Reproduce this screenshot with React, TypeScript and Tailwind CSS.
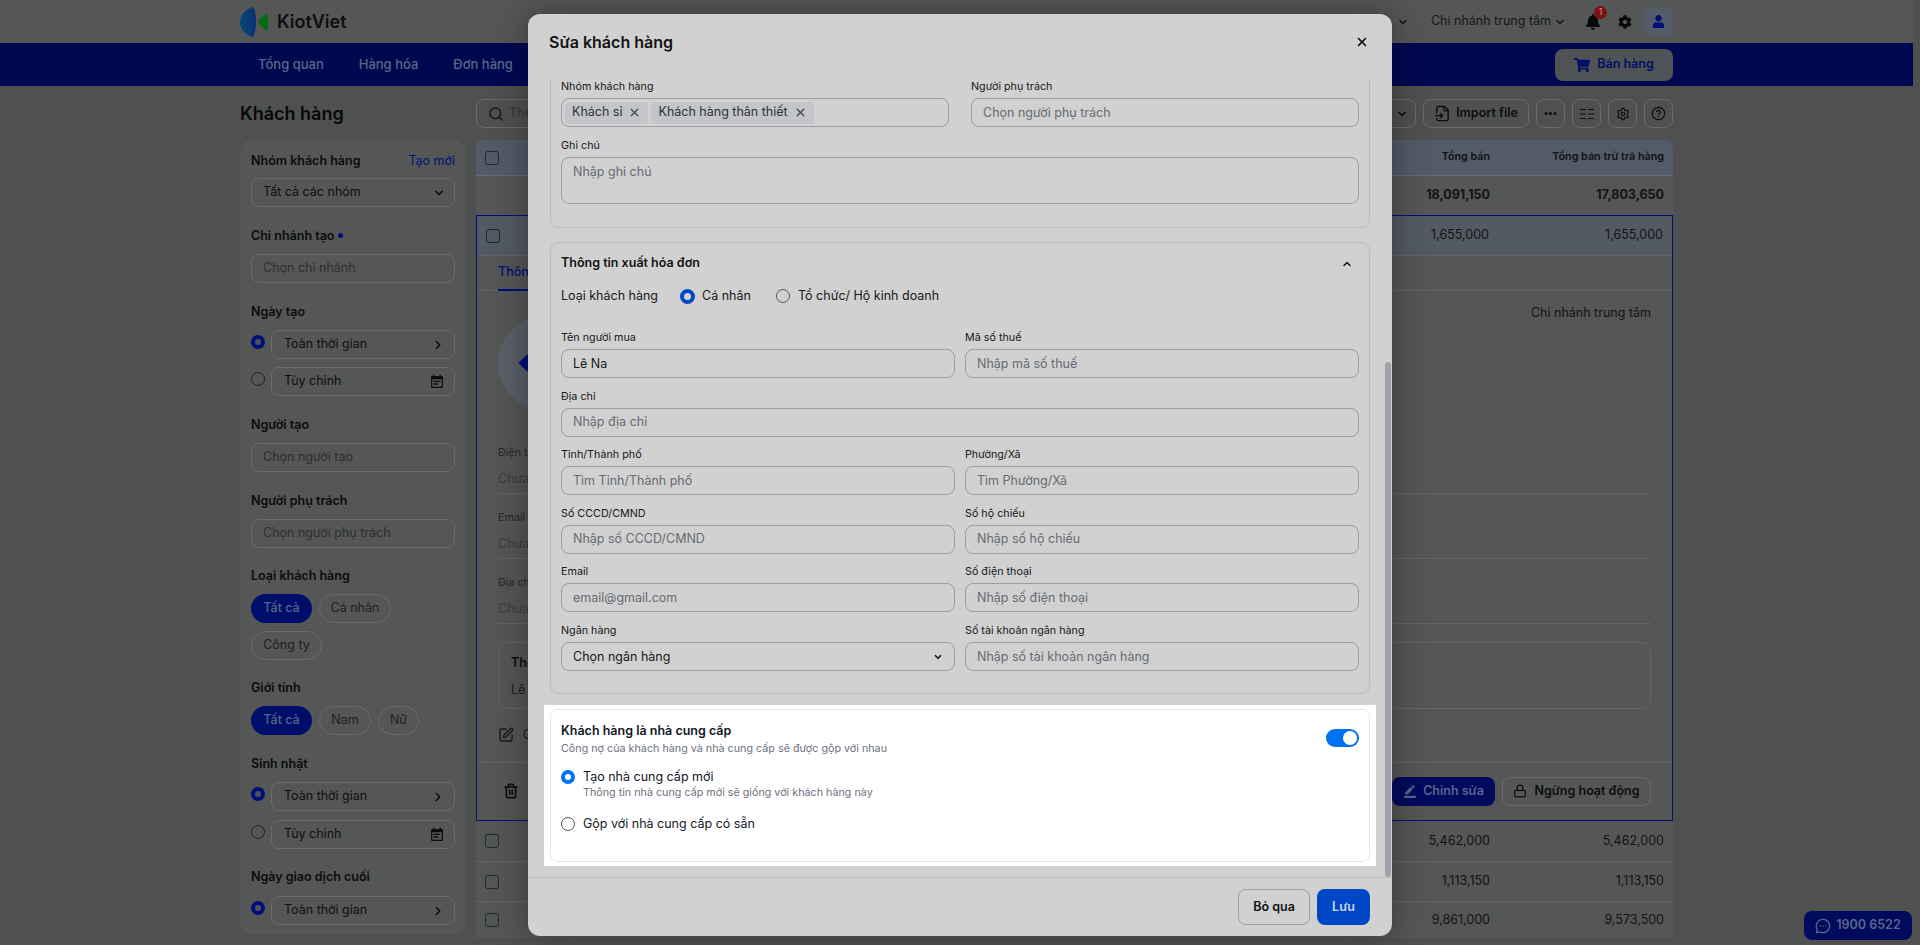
import React from "react";
import { ChevronDown, ChevronRight, ChevronUp, CircleHelp, Ellipsis, FileInput, Lock, MessageCircleMore, Search, Settings, SquarePen, Trash2, X } from "lucide-react";
import { FaBell, FaCog, FaShoppingCart, FaUser } from "react-icons/fa";
import { MdEventNote, MdBorderColor } from "react-icons/md";

function Logo() {
  return (
    <svg width="30" height="30" viewBox="0 0 30 30" className="shrink-0">
      <defs>
        <linearGradient id="lg" x1="0" x2="1" y1="0" y2="0">
          <stop offset="0" stopColor="#074a78" />
          <stop offset="1" stopColor="#0b2f73" />
        </linearGradient>
      </defs>
      <path d="M13.5 0C5 2 0 8 0 15s5 13 13.500 15C15.500 25 16 20 16 15S15.500 5 13.500 0z" fill="url(#lg)" />
      <path d="M27.500 6c1 6 1 12 0 18-3-1.500-7-5-10-9 3-4 7-7.500 10-9z" fill="#056b16" />
    </svg>
  );
}

function SideLabel({ children, className = "" }: { children: React.ReactNode; className?: string }) {
  return <div className={"h-[17px] text-[12.5px] leading-[17px] font-semibold text-[#0b0c0d] " + className}>{children}</div>;
}

function SideInput({ text }: { text: string }) {
  return <div className="mt-[10px] flex h-[29px] items-center rounded-lg border border-[#696b6c] px-[11px] text-[12.5px] text-[#2c2f33]">{text}</div>;
}

function RadioDark({ on }: { on?: boolean }) {
  return on ? (
    <span className="block size-[14px] shrink-0 rounded-full border-[4px] border-[#00107a] bg-[#50535a]" />
  ) : (
    <span className="block size-[14px] shrink-0 rounded-full border border-[#1d2430]" />
  );
}

function DateRow({ on, text, cal }: { on?: boolean; text: string; cal?: boolean }) {
  return (
    <div className="flex items-start gap-[6px]">
      <span className="pt-[5px]"><RadioDark on={on} /></span>
      <div className="flex h-[29px] flex-1 items-center justify-between rounded-lg border border-[#696b6c] pl-[12px] pr-[9px] text-[12.5px] text-[#0e0f11]">
        <span>{text}</span>
        {cal ? <MdEventNote size={16} className="text-[#0c0d0f]" /> : <ChevronRight size={14} strokeWidth={2.5} className="text-[#0c0d0f]" />}
      </div>
    </div>
  );
}

function Pill({ text, on, w }: { text: string; on?: boolean; w: string }) {
  return on ? (
    <span className={"flex h-[29px] items-center justify-center rounded-full bg-[#000e6b] text-[12.5px] font-medium text-[#59678a] " + w}>{text}</span>
  ) : (
    <span className={"flex h-[29px] items-center justify-center rounded-full border border-[#696b6c] text-[12.5px] text-[#1d2024] " + w}>{text}</span>
  );
}

function Sidebar() {
  return (
    <aside className="h-[794px] w-[226px] shrink-0 overflow-hidden rounded-xl bg-[#555656] px-[11px] pt-[12px]">
      <div className="flex items-center justify-between">
        <SideLabel>Nhóm khách hàng</SideLabel>
        <span className="text-[12.5px] leading-[17px] text-[#00107a]">Tạo mới</span>
      </div>
      <div className="mt-[9px] flex h-[29px] items-center justify-between rounded-lg border border-[#696b6c] pl-[11px] pr-[9px] text-[12.5px] text-[#0e0f11]">
        <span>Tất cả các nhóm</span>
        <ChevronDown size={12} strokeWidth={3.5} className="text-[#0c0d0f]" />
      </div>
      <SideLabel className="mt-[20px] flex items-center gap-[4px]">Chi nhánh tạo <span className="size-[5px] rounded-full bg-[#00107a]" /></SideLabel>
      <SideInput text="Chọn chi nhánh" />
      <SideLabel className="mt-[20px]">Ngày tạo</SideLabel>
      <div className="mt-[10px] flex flex-col gap-[8px]">
        <DateRow on text="Toàn thời gian" />
        <DateRow text="Tùy chỉnh" cal />
      </div>
      <SideLabel className="mt-[20px]">Người tạo</SideLabel>
      <SideInput text="Chọn người tạo" />
      <SideLabel className="mt-[20px]">Người phụ trách</SideLabel>
      <SideInput text="Chọn người phụ trách" />
      <SideLabel className="mt-[19px]">Loại khách hàng</SideLabel>
      <div className="mt-[10px] flex flex-wrap gap-x-[7px] gap-y-[8px]">
        <Pill on text="Tất cả" w="w-[61px]" />
        <Pill text="Cá nhân" w="w-[72px]" />
        <Pill text="Công ty" w="w-[71px]" />
      </div>
      <SideLabel className="mt-[19px]">Giới tính</SideLabel>
      <div className="mt-[10px] flex gap-[7px]">
        <Pill on text="Tất cả" w="w-[61px]" />
        <Pill text="Nam" w="w-[52px]" />
        <Pill text="Nữ" w="w-[41px]" />
      </div>
      <SideLabel className="mt-[20px]">Sinh nhật</SideLabel>
      <div className="mt-[10px] flex flex-col gap-[9px]">
        <DateRow on text="Toàn thời gian" />
        <DateRow text="Tùy chỉnh" cal />
      </div>
      <SideLabel className="mt-[19px]">Ngày giao dịch cuối</SideLabel>
      <div className="mt-[11px] flex flex-col gap-[9px]">
        <DateRow on text="Toàn thời gian" />
      </div>
    </aside>
  );
}

function ToolBtn({ children, className = "" }: { children: React.ReactNode; className?: string }) {
  return <div className={"flex h-[29px] items-center justify-center rounded-lg border border-[#696b6c] text-[#0c0d0f] " + className}>{children}</div>;
}

function Check() {
  return <span className="block size-[14px] shrink-0 rounded-[3px] border border-[#1f2733]" />;
}

function DataRow({ a, b, className = "" }: { a: string; b: string; className?: string }) {
  return (
    <div className={"flex items-center pl-[9px] pr-[9px] " + className}>
      <Check />
      <span className="ml-auto w-[140px] text-right text-[12.5px] text-[#121315]">{a}</span>
      <span className="w-[174px] text-right text-[12.5px] text-[#121315]">{b}</span>
    </div>
  );
}

function Info({ label }: { label: string }) {
  return (
    <div className="flex h-[65px] flex-col border-b border-[#626364]">
      <span className="mt-[16px] text-[10.75px] leading-[16px] text-[#24272b]">{label}</span>
      <span className="mt-[9px] text-[12.5px] leading-[17px] text-[#3a3d41]">Chưa có</span>
    </div>
  );
}

function MainTable() {
  return (
    <div className="ml-[10px] flex-1">
      <div className="flex h-[36px] items-center justify-between rounded-t-lg border-b border-[#5f6c82] bg-[#535b68] px-[9px]">
        <Check />
        <div className="flex text-[10.75px] font-semibold text-[#101215]">
          <span className="w-[140px] text-right">Tổng bán</span>
          <span className="w-[174px] text-right">Tổng bán trừ trả hàng</span>
        </div>
      </div>
      <div className="flex h-[39px] items-center justify-end bg-[#555656] pr-[9px]">
        <span className="w-[140px] text-right text-[12.5px] font-bold text-[#121315]">18,091,150</span>
        <span className="w-[174px] text-right text-[12.5px] font-bold text-[#121315]">17,803,650</span>
      </div>
      <div className="h-[606px] border-[1.5px] border-[#00107a] bg-[#555656]">
        <DataRow a="1,655,000" b="1,655,000" className="h-[40px] border-b border-[#626364] bg-[#535a62] pr-[8px]" />
        <div className="h-[35px] border-b border-[#626364] pl-[21px]">
          <span className="flex h-[35px] w-[31px] items-center border-b-2 border-[#00107a] text-[12.5px] font-medium whitespace-nowrap text-[#00107a]">Thông</span>
        </div>
        <div className="flex justify-between pl-[21px] pr-[21px]">
          <div className="w-[160px]">
            <div className="mt-[24px] flex size-[96px] items-center rounded-full bg-[#5a6069] pl-[23px]">
              <span className="block size-[12px] rotate-45 bg-[#00107a]" />
            </div>
          </div>
          <span className="mt-[13px] text-[12.5px] leading-[17px] text-[#111214]">Chi nhánh trung tâm</span>
        </div>
        <div className="mt-[18px] px-[21px]">
          <Info label="Điện thoại" />
          <Info label="Email" />
          <Info label="Địa chỉ" />
          <div className="mt-[18px] h-[67px] rounded-lg border border-[#626364] pl-[12px]">
            <div className="mt-[11px] text-[12.5px] leading-[17px] font-semibold text-[#0c0d0f]">Thông tin xuất hóa đơn</div>
            <div className="mt-[10px] text-[12.5px] leading-[17px] text-[#1d2024]">Lê Na</div>
          </div>
          <div className="mt-[16px] flex h-[20px] items-center gap-[9px] text-[12.5px] text-[#1d2024]">
            <SquarePen size={16} className="text-[#14171b]" />
            <span>Chưa có ghi chú</span>
          </div>
        </div>
        <div className="mt-[17px] flex h-[57px] items-center justify-between border-t border-[#626364] pl-[26px] pr-[21px]">
          <Trash2 size={16} strokeWidth={2.5} className="text-[#0c0d0f]" />
          <div className="flex gap-[7px]">
            <div className="flex h-[29px] w-[103px] items-center justify-center gap-[6px] rounded-lg bg-[#000b5e] text-[12.5px] font-semibold text-[#59678a]">
              <MdBorderColor size={14} />
              <span>Chỉnh sửa</span>
            </div>
            <div className="flex h-[29px] w-[149px] items-center justify-center gap-[7px] rounded-lg border border-[#696b6c] text-[12.5px] font-semibold text-[#0c0d0f]">
              <Lock size={14} strokeWidth={2.2} />
              <span>Ngừng hoạt động</span>
            </div>
          </div>
        </div>
      </div>
      <DataRow a="5,462,000" b="5,462,000" className="h-[41px] border-b border-[#626364] bg-[#555656]" />
      <DataRow a="1,113,150" b="1,113,150" className="h-[40px] border-b border-[#626364] bg-[#555656]" />
      <DataRow a="9,861,000" b="9,573,500" className="h-[36px] bg-[#555656]" />
    </div>
  );
}

function FieldLabel({ children }: { children: React.ReactNode }) {
  return <div className="mb-[4px] h-[16px] pt-[1px] text-[10.75px] leading-[16px] text-[#16181b]">{children}</div>;
}

function Field({ label, ph, value, select, className = "" }: { label: string; ph?: string; value?: string; select?: boolean; className?: string }) {
  return (
    <div className={className}>
      <FieldLabel>{label}</FieldLabel>
      <div className={"flex h-[29px] items-center justify-between rounded-lg border border-[#9a9da3] pl-[11px] pr-[11px] pt-[1px] text-[12.5px] " + (value || select ? "text-[#15171a]" : "text-[#666b74]")}>
        <span>{value || ph}</span>
        {select && <ChevronDown size={10} strokeWidth={4} className="text-[#15171a]" />}
      </div>
    </div>
  );
}

function Chip({ text }: { text: string }) {
  return (
    <span className="flex h-[22px] items-center gap-[6px] rounded bg-[#c3c5c8] px-[7px] text-[12.5px] text-[#2a3340]">
      {text}
      <X size={13} strokeWidth={2.4} className="text-[#3c4552]" />
    </span>
  );
}

function Modal() {
  return (
    <div className="absolute left-[528px] top-[14px] flex h-[922px] w-[864px] flex-col overflow-hidden rounded-xl bg-[#d1d1d1] shadow-[0_0_36px_rgba(0,0,0,0.35)]">
      <div className="flex h-[65px] shrink-0 items-center justify-between pl-[21px] pr-[23px] pb-[9px]">
        <span className="text-[16px] font-semibold text-[#111214]">Sửa khách hàng</span>
        <X size={14} strokeWidth={3} className="text-[#111214]" />
      </div>
      <div className="relative flex-1 overflow-hidden px-[22px]">
        <div className="absolute right-[1px] top-[283px] h-[515px] w-[6px] rounded-full bg-[#9ea2aa]" />
        <div className="-mt-[17px]">
          <div className="rounded-b-lg border border-[#bcbec2] px-[10px] pb-[23px] pt-[15px]">
            <div className="flex gap-[22px]">
              <div className="w-[388px]">
                <FieldLabel>Nhóm khách hàng</FieldLabel>
                <div className="flex h-[29px] items-center gap-[3px] rounded-lg border border-[#9a9da3] pl-[3px]">
                  <Chip text="Khách sỉ" />
                  <Chip text="Khách hàng thân thiết" />
                </div>
              </div>
              <Field className="w-[388px]" label="Người phụ trách" ph="Chọn người phụ trách" />
            </div>
            <div className="mt-[10px]">
              <FieldLabel>Ghi chú</FieldLabel>
              <div className="h-[47px] rounded-lg border border-[#9a9da3] px-[11px] pt-[5px] text-[12.5px] text-[#666b74]">Nhập ghi chú</div>
            </div>
          </div>
          <div className="mt-[14px] rounded-lg border border-[#bcbec2] px-[10px] pb-[22px]">
            <div className="flex h-[41px] items-center justify-between pr-[6px]">
              <span className="text-[12.5px] font-semibold text-[#111214]">Thông tin xuất hóa đơn</span>
              <ChevronUp size={12} strokeWidth={3} className="text-[#111214]" />
            </div>
            <div className="flex h-[24px] items-center text-[12.5px] text-[#16181b]">
              <span className="w-[119px]">Loại khách hàng</span>
              <span className="block size-[15px] rounded-full border-[4px] border-[#0047c5]" />
              <span className="ml-[7px] w-[74px]">Cá nhân</span>
              <span className="block size-[14px] rounded-full border border-[#51565e]" />
              <span className="ml-[8px]">Tổ chức/ Hộ kinh doanh</span>
            </div>
            <div className="mt-[21px] grid grid-cols-2 gap-x-[10px] gap-y-[9.6px]">
              <Field label="Tên người mua" value="Lê Na" />
              <Field label="Mã số thuế" ph="Nhập mã số thuế" />
              <Field className="col-span-2" label="Địa chỉ" ph="Nhập địa chỉ" />
              <Field label="Tỉnh/Thành phố" ph="Tìm Tỉnh/Thành phố" />
              <Field label="Phường/Xã" ph="Tìm Phường/Xã" />
              <Field label="Số CCCD/CMND" ph="Nhập số CCCD/CMND" />
              <Field label="Số hộ chiếu" ph="Nhập số hộ chiếu" />
              <Field label="Email" ph="email@gmail.com" />
              <Field label="Số điện thoại" ph="Nhập số điện thoại" />
              <Field label="Ngân hàng" value="Chọn ngân hàng" select />
              <Field label="Số tài khoản ngân hàng" ph="Nhập số tài khoản ngân hàng" />
            </div>
          </div>
          <div className="-mx-[6px] mt-[11px] bg-white px-[6px] py-[4px]">
            <div className="h-[153px] rounded-lg border border-[#e4e6ea] px-[10px] pt-[12px]">
              <div className="flex items-start justify-between">
                <div>
                  <div className="text-[12.5px] leading-[17px] font-semibold text-[#111827]">Khách hàng là nhà cung cấp</div>
                  <div className="mt-[2px] text-[10.75px] leading-[16px] text-[#6b7280]">Công nợ của khách hàng và nhà cung cấp sẽ được gộp với nhau</div>
                </div>
                <span className="mt-[7px] flex h-[18px] w-[33px] items-center justify-end rounded-full bg-[#0070f4] pr-[2px]">
                  <span className="size-[14px] rounded-full bg-white" />
                </span>
              </div>
              <div className="mt-[11px] flex items-center gap-[8px]">
                <span className="block size-[14px] rounded-full border-[4px] border-[#0070f4]" />
                <span className="text-[12.5px] leading-[18px] text-[#111827]">Tạo nhà cung cấp mới</span>
              </div>
              <div className="ml-[22px] text-[10.75px] leading-[14px] text-[#6b7280]">Thông tin nhà cung cấp mới sẽ giống với khách hàng này</div>
              <div className="mt-[15px] flex items-center gap-[8px]">
                <span className="block size-[14px] rounded-full border border-[#4b5563]" />
                <span className="text-[12.5px] leading-[18px] text-[#111827]">Gộp với nhà cung cấp có sẵn</span>
              </div>
            </div>
          </div>
        </div>
      </div>
      <div className="flex h-[59px] shrink-0 items-center justify-end gap-[7px] border-t border-[#bcbec2] pr-[22px]">
        <span className="flex h-[36px] w-[72px] items-center justify-center rounded-lg border border-[#9a9da3] text-[12.5px] font-semibold text-[#111214]">Bỏ qua</span>
        <span className="flex h-[36px] w-[53px] items-center justify-center rounded-lg bg-[#0047c5] text-[12.5px] font-semibold text-[#cfd6e6]">Lưu</span>
      </div>
    </div>
  );
}

export default function App() {
  return (
    <div className="relative h-[945px] w-full overflow-hidden bg-[#4f5150] font-['Inter',sans-serif]">
      <header className="flex h-[43px] w-[1913px] items-center bg-[#555656] pl-[240px] pr-[240px]">
        <Logo />
        <span className="ml-[7px] text-[18px] font-semibold text-[#0d0e10]">KiotViet</span>
        <div className="ml-auto flex items-center text-[12.5px] text-[#14161a]">
          <ChevronDown size={12} strokeWidth={3} />
          <span className="ml-[22px]">Chi nhánh trung tâm</span>
          <ChevronDown size={12} strokeWidth={3} className="ml-[3px]" />
          <span className="relative ml-[19px]">
            <FaBell size={16} className="text-[#07080a]" />
            <span className="absolute -right-[6px] -top-[8px] flex size-[13px] items-center justify-center rounded-full bg-[#7f1010] text-[9px] text-[#c0a0a0]">1</span>
          </span>
          <FaCog size={14} className="ml-[17px] text-[#07080a]" />
          <span className="ml-[12px] flex size-[29px] items-center justify-center rounded-lg bg-[#535b69]">
            <FaUser size={13} className="text-[#00107a]" />
          </span>
        </div>
      </header>
      <nav className="flex h-[43px] w-[1913px] items-center bg-[#000850] pl-[258px] pr-[240px] text-[13px] font-medium text-[#59678a]">
        <span>Tổng quan</span>
        <span className="ml-[35px]">Hàng hóa</span>
        <span className="ml-[35px]">Đơn hàng</span>
        <span className="ml-auto flex h-[32px] w-[118px] items-center justify-center gap-[7px] rounded-lg bg-[#505356] text-[12.5px] font-semibold text-[#000f66]">
          <FaShoppingCart size={16} />
          Bán hàng
        </span>
      </nav>
      <main className="flex w-[1673px] flex-col pl-[240px] pt-[13px]">
        <div className="flex h-[29px] items-center">
          <span className="w-[236px] text-[18px] font-semibold text-[#07080a]">Khách hàng</span>
          <div className="flex h-[29px] w-[300px] items-center gap-[5px] rounded-lg border border-[#696b6c] pl-[11px] text-[12.5px] text-[#33363a]">
            <Search size={16} strokeWidth={2.2} className="text-[#14171b]" />
            <span>Theo tên, SĐT</span>
          </div>
          <div className="ml-auto flex items-center gap-[7px]">
            <ToolBtn className="w-[40px] justify-end pr-[7px]"><ChevronDown size={12} strokeWidth={3.5} /></ToolBtn>
            <ToolBtn className="w-[106px] gap-[5px] text-[12.5px] font-semibold"><FileInput size={17} />Import file</ToolBtn>
            <ToolBtn className="w-[29px]"><Ellipsis size={15} strokeWidth={3} /></ToolBtn>
            <ToolBtn className="w-[29px]">
              <svg width="14" height="12" viewBox="0 0 14 12" fill="none" stroke="currentColor" strokeWidth="1.2"><path d="M0 1.500h6M8 1.500h6M0 6h6M8 6h6M0 10.500h6M8 10.500h6" /></svg>
            </ToolBtn>
            <ToolBtn className="w-[29px]"><Settings size={14} strokeWidth={2} /></ToolBtn>
            <ToolBtn className="w-[29px]"><CircleHelp size={15} strokeWidth={2} /></ToolBtn>
          </div>
        </div>
        <div className="mt-[12px] flex">
          <Sidebar />
          <MainTable />
        </div>
      </main>
      <Modal />
      <div className="absolute left-[1804px] top-[911px] flex h-[29px] w-[108px] items-center justify-center gap-[5px] rounded-lg bg-[#000b5e] text-[12.5px] font-semibold text-[#59678a]">
        <MessageCircleMore size={16} />
        1900 6522
      </div>
    </div>
  );
}
